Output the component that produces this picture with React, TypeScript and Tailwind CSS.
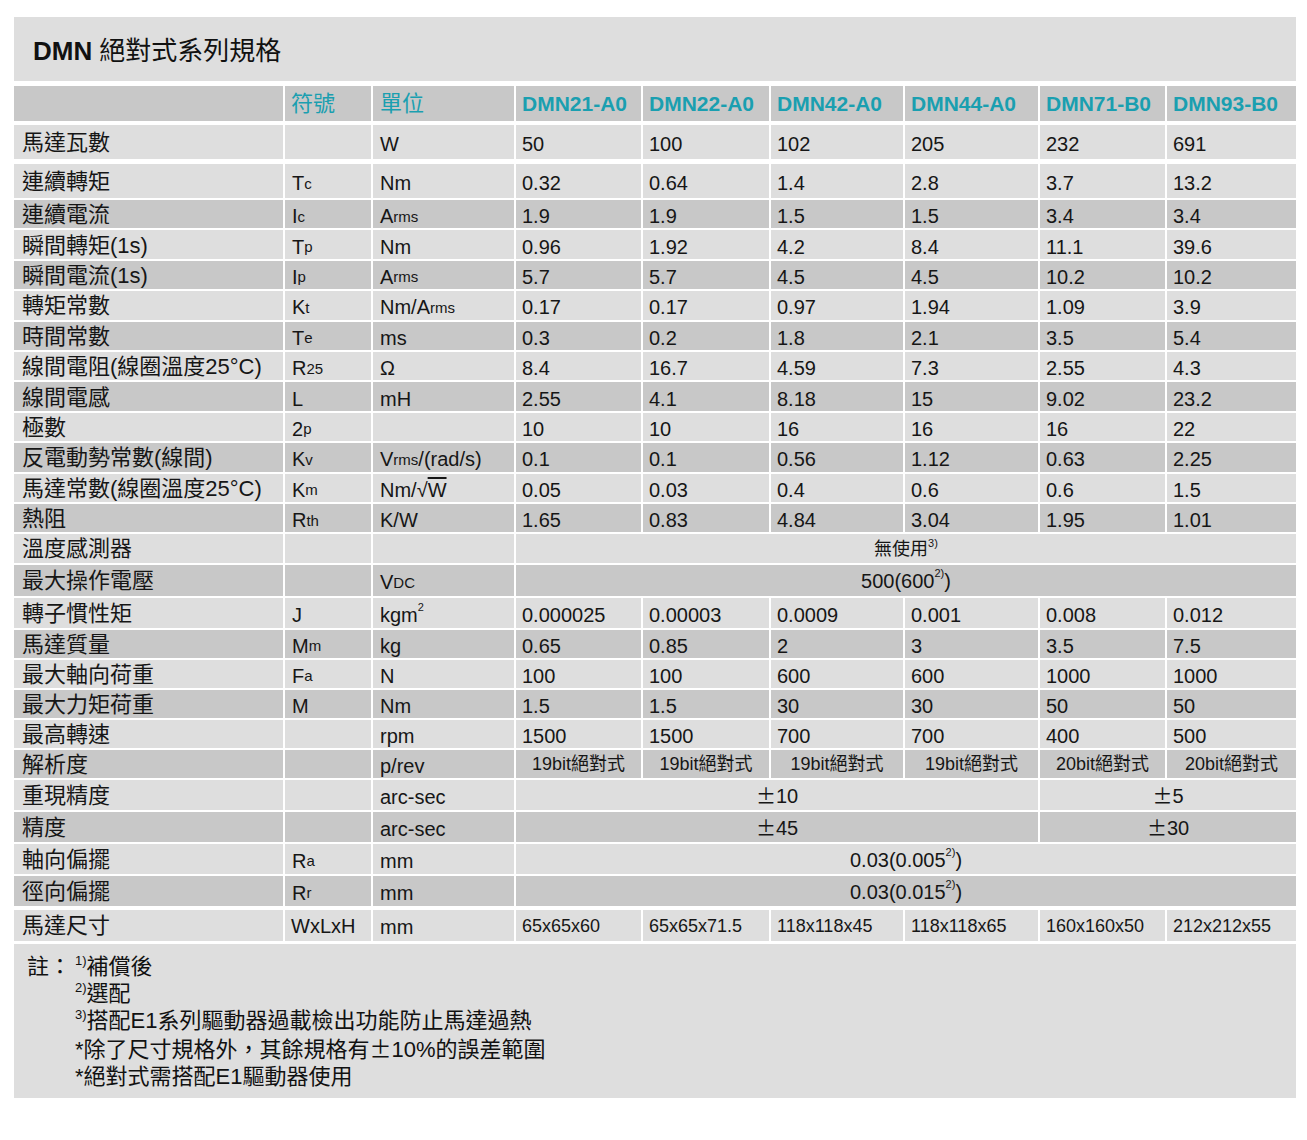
import type { ReactNode } from 'react'

const COLS = 'grid-cols-[269px_86px_141px_125px_126px_132px_133px_125px_129px]'
const LIGHT = 'bg-[#dedede]'
const DARK = 'bg-[#c8c8c8]'

type Span = { c: ReactNode; span: string }
type Val = ReactNode | Span

type SpecRow = {
  label: ReactNode
  sym?: ReactNode
  unit?: ReactNode
  vals: Val[]
  dark?: boolean
  h: string
  mt: string
  small?: boolean
}

// small trailing letters: Tc, Arms, R25 ...
const sb = (main: string, small: string) => (
  <>
    {main}
    <span className="text-[15px]">{small}</span>
  </>
)

const sup = (t: string) => <sup className="-top-[8px] text-[11px]">{t}</sup>
const noteSup = (t: string) => <sup className="-top-[9px] text-[13px]">{t}</sup>

const pm = (n: string) => (
  <>
    <span className="font-['Noto_Sans_CJK_TC',sans-serif]">±</span>
    {n}
  </>
)

const models = ['DMN21-A0', 'DMN22-A0', 'DMN42-A0', 'DMN44-A0', 'DMN71-B0', 'DMN93-B0']

const isSpan = (v: Val): v is Span =>
  typeof v === 'object' && v !== null && 'span' in (v as object)

const rows: SpecRow[] = [
  { label: '馬達瓦數', unit: 'W', vals: ['50', '100', '102', '205', '232', '691'], h: 'h-[34px]', mt: 'mt-[4px]' },
  { label: '連續轉矩', sym: sb('T', 'c'), unit: 'Nm', vals: ['0.32', '0.64', '1.4', '2.8', '3.7', '13.2'], h: 'h-[34px]', mt: 'mt-[5px]' },
  { label: '連續電流', sym: sb('I', 'c'), unit: sb('A', 'rms'), vals: ['1.9', '1.9', '1.5', '1.5', '3.4', '3.4'], dark: true, h: 'h-[28.4px]', mt: 'mt-[2px]' },
  { label: '瞬間轉矩(1s)', sym: sb('T', 'p'), unit: 'Nm', vals: ['0.96', '1.92', '4.2', '8.4', '11.1', '39.6'], h: 'h-[28.4px]', mt: 'mt-[2px]' },
  { label: '瞬間電流(1s)', sym: sb('I', 'p'), unit: sb('A', 'rms'), vals: ['5.7', '5.7', '4.5', '4.5', '10.2', '10.2'], dark: true, h: 'h-[28.4px]', mt: 'mt-[2px]' },
  { label: '轉矩常數', sym: sb('K', 't'), unit: <>Nm/A<span className="text-[15px]">rms</span></>, vals: ['0.17', '0.17', '0.97', '1.94', '1.09', '3.9'], h: 'h-[28.4px]', mt: 'mt-[2px]' },
  { label: '時間常數', sym: sb('T', 'e'), unit: 'ms', vals: ['0.3', '0.2', '1.8', '2.1', '3.5', '5.4'], dark: true, h: 'h-[28.4px]', mt: 'mt-[2px]' },
  { label: '線間電阻(線圈溫度25°C)', sym: sb('R', '25'), unit: 'Ω', vals: ['8.4', '16.7', '4.59', '7.3', '2.55', '4.3'], h: 'h-[28.4px]', mt: 'mt-[2px]' },
  { label: '線間電感', sym: 'L', unit: 'mH', vals: ['2.55', '4.1', '8.18', '15', '9.02', '23.2'], dark: true, h: 'h-[28.4px]', mt: 'mt-[2px]' },
  { label: '極數', sym: sb('2', 'p'), vals: ['10', '10', '16', '16', '16', '22'], h: 'h-[28.4px]', mt: 'mt-[2px]' },
  { label: '反電動勢常數(線間)', sym: sb('K', 'v'), unit: <>V<span className="text-[15px]">rms</span>/(rad/s)</>, vals: ['0.1', '0.1', '0.56', '1.12', '0.63', '2.25'], dark: true, h: 'h-[28.4px]', mt: 'mt-[2px]' },
  { label: '馬達常數(線圈溫度25°C)', sym: sb('K', 'm'), unit: <>Nm/√<span className="overline">W</span></>, vals: ['0.05', '0.03', '0.4', '0.6', '0.6', '1.5'], h: 'h-[28.4px]', mt: 'mt-[2px]' },
  { label: '熱阻', sym: sb('R', 'th'), unit: 'K/W', vals: ['1.65', '0.83', '4.84', '3.04', '1.95', '1.01'], dark: true, h: 'h-[28.4px]', mt: 'mt-[2px]' },
  { label: '溫度感測器', vals: [{ c: <span className="text-[18px]">無使用{sup('3)')}</span>, span: 'col-span-6' }], h: 'h-[28.4px]', mt: 'mt-[2px]' },
  { label: '最大操作電壓', unit: sb('V', 'DC'), vals: [{ c: <>500(600{sup('2)')})</>, span: 'col-span-6' }], dark: true, h: 'h-[31px]', mt: 'mt-[2px]' },
  { label: '轉子慣性矩', sym: 'J', unit: <>kgm{sup('2')}</>, vals: ['0.000025', '0.00003', '0.0009', '0.001', '0.008', '0.012'], h: 'h-[30px]', mt: 'mt-[2px]' },
  { label: '馬達質量', sym: sb('M', 'm'), unit: 'kg', vals: ['0.65', '0.85', '2', '3', '3.5', '7.5'], dark: true, h: 'h-[28px]', mt: 'mt-[2px]' },
  { label: '最大軸向荷重', sym: sb('F', 'a'), unit: 'N', vals: ['100', '100', '600', '600', '1000', '1000'], h: 'h-[28px]', mt: 'mt-[2px]' },
  { label: '最大力矩荷重', sym: 'M', unit: 'Nm', vals: ['1.5', '1.5', '30', '30', '50', '50'], dark: true, h: 'h-[28px]', mt: 'mt-[2px]' },
  { label: '最高轉速', unit: 'rpm', vals: ['1500', '1500', '700', '700', '400', '500'], h: 'h-[28px]', mt: 'mt-[2px]' },
  { label: '解析度', unit: 'p/rev', vals: ['19bit絕對式', '19bit絕對式', '19bit絕對式', '19bit絕對式', '20bit絕對式', '20bit絕對式'], dark: true, small: true, h: 'h-[28px]', mt: 'mt-[2px]' },
  { label: '重現精度', unit: 'arc-sec', vals: [{ c: pm('10'), span: 'col-span-4' }, { c: pm('5'), span: 'col-span-2' }], h: 'h-[30px]', mt: 'mt-[2px]' },
  { label: '精度', unit: 'arc-sec', vals: [{ c: pm('45'), span: 'col-span-4' }, { c: pm('30'), span: 'col-span-2' }], dark: true, h: 'h-[30px]', mt: 'mt-[2px]' },
  { label: '軸向偏擺', sym: sb('R', 'a'), unit: 'mm', vals: [{ c: <>0.03(0.005{sup('2)')})</>, span: 'col-span-6' }], h: 'h-[30px]', mt: 'mt-[2px]' },
  { label: '徑向偏擺', sym: sb('R', 'r'), unit: 'mm', vals: [{ c: <>0.03(0.015{sup('2)')})</>, span: 'col-span-6' }], dark: true, h: 'h-[30px]', mt: 'mt-[2px]' },
]

function Row({ r }: { r: SpecRow }) {
  const bg = r.dark ? DARK : LIGHT
  return (
    <div className={`grid ${COLS} gap-x-[2px] ${r.mt} ${r.h}`}>
      <div className={`${bg} flex items-center pl-[8px] pt-[2px] text-[22px]`}>{r.label}</div>
      <div className={`${bg} flex items-center pl-[7px] pt-[4px]`}>{r.sym}</div>
      <div className={`${bg} flex items-center pl-[7px] pt-[4px]`}>{r.unit}</div>
      {r.vals.map((v, i) =>
        isSpan(v) ? (
          <div key={i} className={`${bg} ${v.span} flex items-center justify-center pt-[2px]`}>
            {v.c}
          </div>
        ) : r.small ? (
          <div key={i} className={`${bg} flex items-center justify-center text-[18px]`}>
            {v}
          </div>
        ) : (
          <div key={i} className={`${bg} flex items-center pl-[6px] pt-[4px]`}>
            {v}
          </div>
        ),
      )}
    </div>
  )
}

export default function App() {
  return (
    <div className="min-h-[1140px] bg-white pl-[14px] pt-[17px] font-['Liberation_Sans','Noto_Sans_CJK_TC',sans-serif] text-[20px] leading-none text-[#161616]">
      <div className="w-[1282px]">
        <div className="flex h-[64px] items-center bg-[#dedede] pl-[19px] pt-[4px] text-[26px] text-[#111]">
          <span className="font-bold">DMN</span>
          <span className="ml-[7px]">絕對式系列規格</span>
        </div>

        {/* header */}
        <div className={`mt-[5px] grid h-[35px] ${COLS} gap-x-[2px] text-[#1a9fb0]`}>
          <div className={DARK} />
          <div className={`${DARK} flex items-center pl-[6px] text-[22px]`}>符號</div>
          <div className={`${DARK} flex items-center pl-[7px] text-[22px]`}>單位</div>
          {models.map(m => (
            <div key={m} className={`${DARK} flex items-center pl-[6px] text-[21px] font-bold`}>
              {m}
            </div>
          ))}
        </div>

        {rows.map((r, i) => (
          <Row key={i} r={r} />
        ))}

        <div className={`mt-[4px] grid h-[31px] ${COLS} gap-x-[2px]`}>
          <div className={`${LIGHT} flex items-center pl-[8px] pt-[2px] text-[22px]`}>馬達尺寸</div>
          <div className={`${LIGHT} flex items-center pl-[6px] pt-[2px]`}>WxLxH</div>
          <div className={`${LIGHT} flex items-center pl-[7px] pt-[4px]`}>mm</div>
          {['65x65x60', '65x65x71.5', '118x118x45', '118x118x65', '160x160x50', '212x212x55'].map(s => (
            <div key={s} className={`${LIGHT} flex items-center pl-[6px] pt-[2px] text-[18px]`}>
              {s}
            </div>
          ))}
        </div>

        <div className="mt-[3px] flex h-[154px] bg-[#dedede] pl-[13px] pt-[9px] text-[22px] leading-[27px] text-[#111]">
          <div className="w-[48px]">註：</div>
          <div>
            <div>{noteSup('1)')}補償後</div>
            <div>{noteSup('2)')}選配</div>
            <div>{noteSup('3)')}搭配E1系列驅動器過載檢出功能防止馬達過熱</div>
            <div>
              *除了尺寸規格外，其餘規格有<span className="font-['Noto_Sans_CJK_TC',sans-serif]">±</span>10%的誤差範圍
            </div>
            <div>*絕對式需搭配E1驅動器使用</div>
          </div>
        </div>
      </div>
    </div>
  )
}
